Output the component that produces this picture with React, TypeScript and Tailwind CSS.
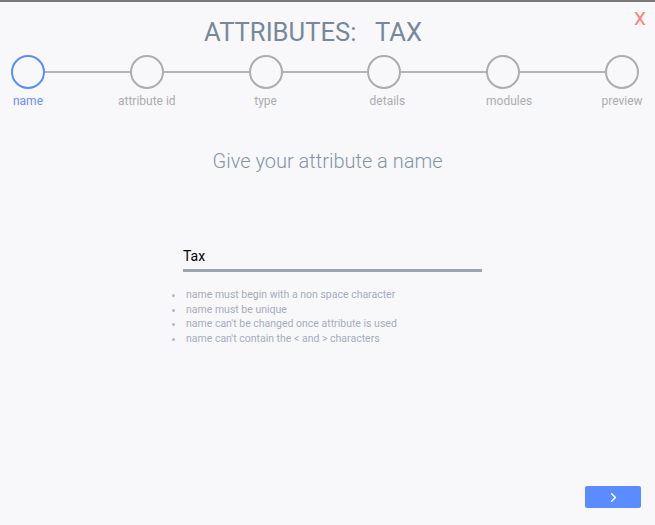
import { ChevronRight } from "lucide-react";

const steps = [
  { label: "name", shift: "" },
  { label: "attribute id", shift: "" },
  { label: "type", shift: "" },
  { label: "details", shift: "translate-x-[3px]" },
  { label: "modules", shift: "translate-x-[6px]" },
  { label: "preview", shift: "" },
];

const rules = [
  "name must begin with a non space character",
  "name must be unique",
  "name can't be changed once attribute is used",
  "name can't contain the < and > characters",
];

export default function App() {
  return (
    <div
      className="relative flex h-[525px] w-[655px] flex-col border-t-2 border-[#7a7a7a] bg-[#f8f8fb]"
      style={{ fontFamily: "Roboto, 'Liberation Sans', sans-serif" }}
    >
      <button className="absolute right-[9px] top-[5px] text-[19px] leading-[24px] text-[#ff7c7c]">
        X
      </button>

      <h1 className="pr-[29px] pt-[15px] text-center text-[25.6px] leading-[30px] text-[#76889a]">
        ATTRIBUTES:&nbsp;&nbsp; TAX
      </h1>

      {/* stepper */}
      <div className="mt-[8px] flex pl-[11px] pr-[16px]">
        {steps.map((s, i) => (
          <div key={s.label} className="contents">
            {i > 0 && <div className="mt-[16px] h-[2px] flex-1 bg-[#b4b4b4]" />}
            <div className="flex w-[34px] flex-col items-center">
              <div
                className={`h-[34px] w-[34px] rounded-full border-2 ${
                  i === 0 ? "border-[#5b8cff]" : "border-[#adadad]"
                }`}
              />
              <span
                className={`mt-[4px] whitespace-nowrap text-[12px] leading-[16px] ${s.shift} ${
                  i === 0 ? "text-[#6b8fff]" : "text-[#acacac]"
                }`}
              >
                {s.label}
              </span>
            </div>
          </div>
        ))}
      </div>

      <h2 className="mt-[39px] text-center text-[20px] font-light leading-[26px] text-[#8595a5]">
        Give your attribute a name
      </h2>

      <div className="ml-[183px] mt-[72px] w-[299px] border-b-[3px] border-[#9ba3b5] pb-[3px] text-[14px] leading-[20px] text-black">
        Tax
      </div>

      <ul className="ml-[172px] mt-[16px] text-[10.5px] leading-[14.7px] text-[#a6acbd]">
        {rules.map((r) => (
          <li key={r} className="flex items-center">
            <span className="mr-[11px] h-[3px] w-[3px] rounded-full bg-[#b5b9c6]" />
            {r}
          </li>
        ))}
      </ul>

      <button className="mb-[17px] mr-[14px] mt-auto flex h-[22px] w-[56px] items-center justify-center self-end rounded-[2px] bg-[#5b8cff] text-white">
        <ChevronRight size={15} strokeWidth={2.5} />
      </button>
    </div>
  );
}
